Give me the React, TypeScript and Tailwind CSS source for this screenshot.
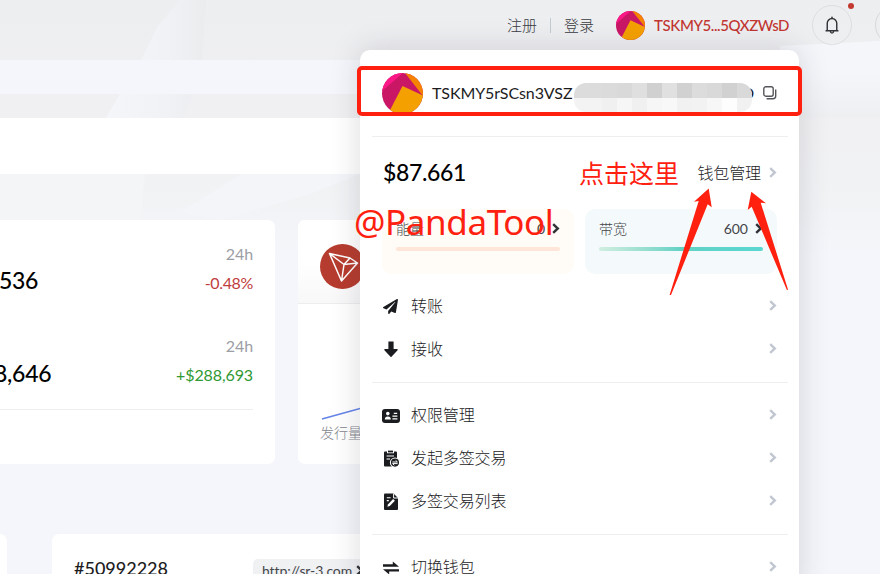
import React from 'react';
import { AiOutlineBell } from 'react-icons/ai';
import { FaPaperPlane } from 'react-icons/fa';

const ink = '#1b1c1f';

function Avatar({ size, id }: { size: number; id: string }) {
  return (
    <svg width={size} height={size} viewBox="0 0 41 41" className="shrink-0">
      <clipPath id={id}>
        <circle cx="20.5" cy="20.5" r="20.5" />
      </clipPath>
      <g clipPath={`url(#${id})`}>
        <rect width="41" height="41" fill="#c91766" />
        <path d="M0 0H21L0 18Z" fill="#fb1886" />
        <path d="M23 0H41V23Z" fill="#f58200" />
        <path d="M20.5 13L41 22.5V41H6Z" fill="#f4a000" />
      </g>
    </svg>
  );
}

function Chevron({ color = '#c1c7d0' }: { color?: string }) {
  return (
    <svg width="8" height="11" viewBox="0 0 8 11" className="relative -top-px shrink-0" fill="none" stroke={color} strokeWidth="2.4">
      <path d="M1.2 1.2L5.8 5.5L1.2 9.8" />
    </svg>
  );
}

function DownIcon() {
  return (
    <svg width="18" height="18" viewBox="0 0 18 18" fill={ink}>
      <path d="M6.4 0.5h5.2v7.6h4v1.2L9 16.3 2.4 9.3V8.1h4z" />
    </svg>
  );
}

function CardIcon() {
  return (
    <svg width="18" height="18" viewBox="0 0 18 18">
      <rect x="0" y="2" width="18" height="14" rx="3" fill={ink} />
      <circle cx="5.8" cy="6.6" r="1.8" fill="#fff" />
      <path d="M2.8 12.6q0-3 3-3t3 3z" fill="#fff" />
      <path d="M11.8 6.4h3.4M10.4 9.2h5M10.4 11.8h5" stroke="#fff" strokeWidth="1.2" />
    </svg>
  );
}

function ClipboardIcon() {
  return (
    <svg width="18" height="18" viewBox="0 0 18 18">
      <path d="M3 1.6h2v1.6h7V1.6h2q1 0 1 1v14H3q-1 0-1-1v-13q0-1 1-1z" fill={ink} />
      <rect x="6" y="0.6" width="5" height="1.8" fill={ink} />
      <path d="M4.6 6h7.4M4.6 9h3.5" stroke="#fff" strokeWidth="1.2" />
      <circle cx="13" cy="12.6" r="4.6" fill={ink} stroke="#fff" strokeWidth="1.1" />
      <path d="M10.4 12h5l-1.7-1.6M15.6 13.6h-5l1.7 1.6" fill="none" stroke="#fff" strokeWidth="1" />
    </svg>
  );
}

function EditIcon() {
  return (
    <svg width="18" height="18" viewBox="0 0 18 18">
      <path d="M3 0.6h8.5L16 5V16q0 1-1 1H3q-1 0-1-1V1.6q0-1 1-1z" fill={ink} />
      <path d="M11.6 0.6V5H16" fill="none" stroke="#fff" strokeWidth="1" />
      <path d="M4.8 4.8h3.8M4.8 7.6h2" stroke="#fff" strokeWidth="1.1" />
      <path d="M5.4 13.8l.5-2.4 5.2-5.4 1.8 1.7-5.1 5.4z" fill="#fff" />
    </svg>
  );
}

function SwapIcon() {
  return (
    <svg width="18" height="18" viewBox="0 0 18 18" fill={ink}>
      <path d="M1 5.3h9.8V2.4L17 7.7H1zM17 12.6H7.2v2.9L1 10.2h16z" />
    </svg>
  );
}

function MenuRow({ icon, label }: { icon: React.ReactNode; label: string }) {
  return (
    <div className="flex h-[43px] items-center pl-[10px] pr-[11px]">
      <span className="flex w-[29px] items-center">{icon}</span>
      <span className="relative -top-px flex-1 text-[16px] font-light leading-6 tracking-[-0.1px] text-[#1c1c1e]">{label}</span>
      <Chevron />
    </div>
  );
}

function Rule() {
  return <div className="my-[11px] h-px shrink-0 bg-[#eeeeef]" />;
}

const mosaicTop = ['#dcdcdc', '#dbdbdb', '#d9d9d9', '#dfdfdf', '#d0d0d0', '#e0e0e0', '#d1d1d1', '#dcdcdc', '#d9d9d9', '#d1d1d1', '#d9d9d9'];
const mosaicBottom = ['#f3f3f3', '#f0f0f0', '#f6f6f6', '#f0f0f0', '#f6f6f6', '#f8f8f8', '#f1f1f1', '#f2f2f2', '#f7f7f7', '#fdfdfd', '#f1f1f1'];

function MosaicRow({ colors }: { colors: string[] }) {
  return (
    <div className="flex flex-1">
      {colors.map((c, i) => (
        <span key={i} className={i === 0 ? 'w-[28px] shrink-0' : 'w-[15px] shrink-0'} style={{ backgroundColor: c }} />
      ))}
    </div>
  );
}

function WalletPanel() {
  return (
    <div className="absolute left-[360px] top-[50px] flex h-[540px] w-[439px] flex-col rounded-t-[10px] bg-white pl-3 pr-[11px] shadow-[0_0_30px_rgba(40,44,60,0.17)]">
      <div className="flex h-[86px] shrink-0 items-center pl-[10px]">
        <Avatar size={41} id="avatar-large" />
        <div className="relative ml-[9px] w-[322px] text-[16px] tracking-[-0.1px] text-[#1c1c1e]">
          TSKMY5rSCsn3VSZ
          <span className="absolute right-0 top-0">D</span>
          <div className="absolute left-[142px] top-[2px] flex h-[29px] w-[178px] flex-col overflow-hidden rounded-[12px]">
            <MosaicRow colors={mosaicTop} />
            <MosaicRow colors={mosaicBottom} />
          </div>
        </div>
        <svg width="14" height="14" viewBox="0 0 14 14" className="ml-[9px]" fill="none" stroke="#55565b" strokeWidth="1.4">
          <rect x="0.8" y="0.8" width="9.4" height="9.4" rx="2" />
          <path d="M12.7 3.5v6.5q0 2.7-2.7 2.7H3.6" />
        </svg>
      </div>
      <div className="h-px shrink-0 bg-[#eeeeef]" />
      <div className="flex h-[72px] shrink-0 items-center pl-[11px] pr-[11px]">
        <span className="relative -top-px flex-1 text-[23px] font-medium tracking-[-0.35px] text-black">$87.661</span>
        <span className="mr-2 text-[16px] font-light tracking-[-0.1px] text-[#1c1c1e]">钱包管理</span>
        <Chevron />
      </div>
      <div className="flex shrink-0 gap-[11px] pl-[10px] pr-[11px]">
        <div className="h-[65px] flex-1 rounded-[10px] bg-[#fffbf6] px-[14px] pt-[10px]">
          <div className="flex h-5 items-center text-[14px] text-[#44464a]">
            <span className="relative -top-px flex-1 font-light">能量</span>
            <span className="relative -top-px mr-[7px]">0</span>
            <Chevron color="#2f3136" />
          </div>
          <div className="mt-2 h-1 rounded-full bg-[#ffe6d8]" />
        </div>
        <div className="h-[65px] flex-1 rounded-[10px] bg-[#f4fafb] px-[14px] pt-[10px]">
          <div className="flex h-5 items-center text-[14px] text-[#44464a]">
            <span className="relative -top-px flex-1 font-light">带宽</span>
            <span className="relative -top-px mr-[7px]">600</span>
            <Chevron color="#2f3136" />
          </div>
          <div className="mt-2 h-1 rounded-full bg-linear-to-r from-[#d0eedf] via-[#62d2c5] to-[#58d7d0]" />
        </div>
      </div>
      <div className="mt-[11px] shrink-0">
        <MenuRow icon={<FaPaperPlane size={15} color={ink} className="ml-[1px]" />} label="转账" />
        <MenuRow icon={<DownIcon />} label="接收" />
        <Rule />
        <MenuRow icon={<CardIcon />} label="权限管理" />
        <MenuRow icon={<ClipboardIcon />} label="发起多签交易" />
        <MenuRow icon={<EditIcon />} label="多签交易列表" />
        <Rule />
        <MenuRow icon={<SwapIcon />} label="切换钱包" />
      </div>
    </div>
  );
}

function Backdrop() {
  return (
    <svg className="absolute inset-0" width="880" height="574" viewBox="0 0 880 574">
      <defs>
        <linearGradient id="fade" x1="0" y1="0" x2="0" y2="1">
          <stop offset="0" stopColor="#edeef0" />
          <stop offset="0.4" stopColor="#f0f0f2" />
          <stop offset="0.8" stopColor="#f2f3f5" />
          <stop offset="1" stopColor="#f5f6fb" />
        </linearGradient>
        <linearGradient id="streak" x1="0" y1="0" x2="1" y2="0">
          <stop offset="0" stopColor="#f4f6fa" />
          <stop offset="0.6" stopColor="#f1f2f5" />
          <stop offset="1" stopColor="#ebecee" />
        </linearGradient>
        <linearGradient id="side" x1="0" y1="0" x2="0" y2="1">
          <stop offset="0" stopColor="#f4f6fa" />
          <stop offset="0.4" stopColor="#f4f6fa" />
          <stop offset="1" stopColor="#eeeff1" />
        </linearGradient>
      </defs>
      <rect width="880" height="574" fill="#f5f6fb" />
      <rect width="880" height="255" fill="url(#fade)" />
      <path d="M180 0H206L202 60 184 118H106L128 80 142 58 158 26Z" fill="url(#streak)" />
      <path d="M0 174H145L140 222H0Z" fill="#f3f5f7" />
      <path d="M242 174H360L310 194 220 220 180 212Z" fill="#f3f5f9" />
      <path d="M780 46L880 41V118H780Z" fill="url(#side)" />
    </svg>
  );
}

function Header() {
  return (
    <div className="flex h-[60px] shrink-0 items-start pl-[507px]">
      <div className="flex h-[51px] shrink-0 items-center whitespace-nowrap text-[15px] text-[#3a3b3f]">
        <span className="font-light">注册</span>
        <span className="mx-[13px] h-[15px] w-px bg-[#c5cad2]" />
        <span className="font-light">登录</span>
        <span className="ml-[22px]">
          <Avatar size={29} id="avatar-small" />
        </span>
        <span className="ml-[9px] w-[135px] text-[15px] font-medium tracking-[-0.4px] text-[#c23631]">TSKMY5...5QXZWsD</span>
      </div>
      <div className="relative ml-[23px] mt-[5px] flex size-10 shrink-0 items-center justify-center rounded-full border border-[#dcdee1]">
        <AiOutlineBell size={20} color="#313236" />
        <span className="absolute -top-[3px] right-[-3px] size-[6px] rounded-full bg-[#c23a30]" />
      </div>
      <div className="ml-[23px] mt-[5px] size-10 shrink-0 rounded-full border border-[#d6d8dc]" />
    </div>
  );
}

function StatsCard() {
  return (
    <div className="h-[244px] w-[275px] shrink-0 rounded-r-[7px] bg-white pr-[22px]">
      <div className="flex h-[92px] justify-between pt-[22px]">
        <span className="-ml-px mt-[24px] text-[23px] font-medium leading-7 tracking-[-0.35px] text-black">536</span>
        <div className="text-right text-[16px] leading-[29px] tracking-[-0.1px]">
          <div className="leading-6 text-[#9c9ea5]">24h</div>
          <div className="mt-[2px] tracking-[-0.35px] text-[#c13d3d]">-0.48%</div>
        </div>
      </div>
      <div className="flex h-[98px] justify-between border-b border-[#eeeeef] pt-[22px]">
        <span className="-ml-[6px] mt-[25px] text-[23px] font-medium leading-7 tracking-[-0.25px] text-black">8,646</span>
        <div className="text-right text-[16px] leading-[29px] tracking-[-0.1px]">
          <div className="leading-6 text-[#9c9ea5]">24h</div>
          <div className="mt-[2px] text-[#2f9933]">+$288,693</div>
        </div>
      </div>
    </div>
  );
}

function TokenCard() {
  return (
    <div className="ml-[23px] flex h-[244px] flex-1 flex-col rounded-[7px] bg-white">
      <div className="flex h-[84px] items-center rounded-t-[7px] border-b border-[#eceded] bg-linear-to-b from-white from-50% to-[#f8f8f9] pl-[22px] pt-[9px]">
        <svg width="45" height="45" viewBox="0 0 45 45">
          <circle cx="22.5" cy="22.5" r="22.5" fill="#b63c2f" />
          <path d="M9.5 9.5L30 14L37.5 19L21.5 37ZM9.5 9.5L24 20.5L37.5 19M30 14L24 20.5L21.5 37" fill="none" stroke="#fff" strokeWidth="1.5" strokeLinejoin="round" />
        </svg>
      </div>
      <svg width="50" height="20" viewBox="0 0 50 20" className="ml-[23px] mt-[100px]">
        <path d="M1 15L50 1.5" fill="none" stroke="#6483e8" strokeWidth="1.6" />
      </svg>
      <div className="-mt-px ml-[22px] text-[14px] font-light leading-5 text-[#85878e]">发行量</div>
    </div>
  );
}

function Annotations() {
  return (
    <div className="absolute inset-0 text-[#ff2010]">
      <div className="absolute left-[357px] top-[66px] h-[50px] w-[445px] rounded-[5px] border-4 border-[#ff2010]" />
      <div className="absolute left-[579px] top-[155px] whitespace-nowrap text-[25px] leading-9">点击这里</div>
      <div className="absolute left-[354px] top-[198px] whitespace-nowrap font-['Noto_Sans',sans-serif] text-[35px] leading-[48px] tracking-[-0.4px]">@PandaTool</div>
      <svg className="absolute inset-0" width="880" height="574" viewBox="0 0 880 574" fill="#ff2010">
        <path d="M708.7 188.5L711.7 207.2 707.7 204.3 671 295H669.6L698.7 201 694 201.7Z" />
        <path d="M751.3 191.7L766 203.3 760.7 202.7 788 289.5 787 290.2 751.7 206.7 747.7 210Z" />
      </svg>
    </div>
  );
}

export default function App() {
  return (
    <div className="relative h-[574px] w-[880px] overflow-hidden font-[Lato,'Noto_Sans_CJK_SC',sans-serif]">
      <Backdrop />
      <div className="relative flex h-full flex-col">
        <Header />
        <div className="h-[34px] w-[798px] shrink-0 bg-[#f4f6fb]" />
        <div className="mt-6 h-14 w-[798px] shrink-0 bg-white" />
        <div className="mt-[46px] flex shrink-0 pr-[305px]">
          <StatsCard />
          <TokenCard />
        </div>
        <div className="mt-[70px] flex shrink-0">
          <div className="h-20 w-[7px] rounded-tr-[7px] bg-white" />
          <div className="ml-[45px] flex h-20 w-[560px] items-start rounded-t-[7px] bg-white pl-[22px] pt-[25px]">
            <span className="mt-[-3px] w-[179px] text-[18px] font-medium leading-6 text-[#1c1c1e]">#50992228</span>
            <span className="flex h-6 items-center gap-1 rounded-[5px] bg-[#f0f1f3] px-[9px] text-[14px] tracking-[-0.1px] text-[#44464a]">
              <span className="relative -top-px">http://sr-3.com</span>
              <Chevron color="#2f3136" />
            </span>
          </div>
        </div>
      </div>
      <WalletPanel />
      <Annotations />
    </div>
  );
}
